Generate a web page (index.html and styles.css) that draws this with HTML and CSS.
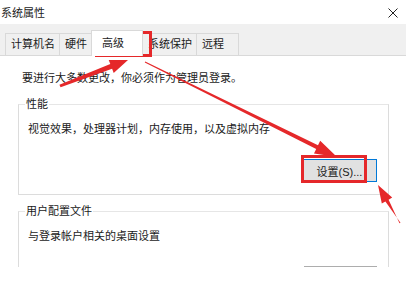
FILE: index.html
```html
<!DOCTYPE html>
<html lang="zh-CN">
<head>
<meta charset="utf-8">
<title>系统属性</title>
<link rel="stylesheet" href="styles.css">
</head>
<body>
<div class="window">
  <div class="titlebar">
    <span class="title">系统属性</span>
    <svg class="close" width="10" height="10" viewBox="0 0 10 10"><path d="M0.5 0.5L9.5 9.5M9.5 0.5L0.5 9.5" stroke="#222" stroke-width="1"/></svg>
  </div>
  <div class="tabstrip">
    <div class="tab">计算机名</div>
    <div class="tab">硬件</div>
    <div class="tab active">高级</div>
    <div class="tab">系统保护</div>
    <div class="tab last">远程</div>
  </div>
  <div class="panel">
    <p class="note">要进行大多数更改，你必须作为管理员登录。</p>
    <fieldset class="group">
      <legend>性能</legend>
      <p class="desc">视觉效果，处理器计划，内存使用，以及虚拟内存</p>
      <div class="actions"><button class="btn default">设置(S)...</button></div>
    </fieldset>
    <fieldset class="group">
      <legend>用户配置文件</legend>
      <p class="desc">与登录帐户相关的桌面设置</p>
      <div class="actions"><button class="btn second">设置(E)...</button></div>
    </fieldset>
  </div>
</div>
<svg class="annot" width="411" height="296" viewBox="0 0 411 296">
  <rect x="96.5" y="32.5" width="54" height="23" fill="none" stroke="#e5282a" stroke-width="3"/>
  <rect x="302.5" y="156.5" width="63" height="25" fill="none" stroke="#e5282a" stroke-width="3"/>
  <polygon fill="#e5282a" points="59.4,84.7 110.3,64.1 108.7,59.9 128,60 113.7,72.9 112.1,68.7 60.6,87.3"/>
  <polygon fill="#e5282a" points="145.2,61.6 318.0,145.3 320.2,140.8 337,157 314.0,153.4 316.2,148.9 144.8,62.4"/>
  <polygon fill="#e5282a" points="400.5,222.7 385.4,201.5 381.8,203.6 378,185 392.2,197.6 388.6,199.7 399.5,223.3"/>
</svg>
</body>
</html>
```

FILE: styles.css
```css
* { box-sizing: border-box; }
html, body { margin: 0; padding: 0; background: #fff; }
body {
  width: 411px;
  height: 296px;
  overflow: hidden;
  position: relative;
  font-family: "Liberation Sans", "Noto Sans CJK SC", sans-serif;
  font-size: 11px;
  color: #1a1a1a;
}
.window { width: 406px; }
.titlebar {
  height: 24px;
  display: flex;
  align-items: center;
  justify-content: space-between;
  padding: 0 8px 0 1px;
}
.title { font-size: 11px; line-height: 14px; margin-top: 2px; }
.close { display: block; margin-top: 1px; }
.tabstrip {
  height: 31px;
  background: #f0f0f0;
  display: flex;
  align-items: flex-end;
  padding-left: 5px;
}
.tab {
  height: 22px;
  line-height: 20px;
  padding: 0 4px 0 5px;
  border: 1px solid #d9d9d9;
  border-bottom: none;
  margin-right: -1px;
  background: #f0f0f0;
}
.tab.active {
  height: 26px;
  line-height: 24px;
  background: #fff;
  padding: 0 18px 0 10px;
  margin-bottom: -1px;
  position: relative;
  z-index: 1;
}
.tab.last { padding-right: 14px; }
.panel {
  border-top: 1px solid #d9d9d9;
  height: 212px;
  overflow: hidden;
  padding: 14px 0 0 18px;
}
.note { margin: 0 0 11px 4px; line-height: 16px; }
.group {
  width: 371px;
  margin: 0 0 9px 0;
  padding: 10px 10px 12px 8px;
  border: 1px solid #dcdcdc;
  border-top-color: #e6e6e6;
}
.group legend {
  padding: 0 1px;
  margin-left: -2px;
  line-height: 14px;
}
.desc { margin: 0 0 22px 1px; line-height: 16px; }
.actions { display: flex; justify-content: flex-end; }
.btn {
  width: 73px;
  height: 23px;
  font-family: inherit;
  font-size: 11px;
  color: #1a1a1a;
  background: #e1e1e1;
  border: 1px solid #adadad;
  padding: 0;
  white-space: nowrap;
  margin-right: 1px;
}
.btn.default { border: 1px solid #0078d7; width: 75px; }
.btn.second { padding-bottom: 12px; }
.annot { position: absolute; left: 0; top: 0; pointer-events: none; }
```
